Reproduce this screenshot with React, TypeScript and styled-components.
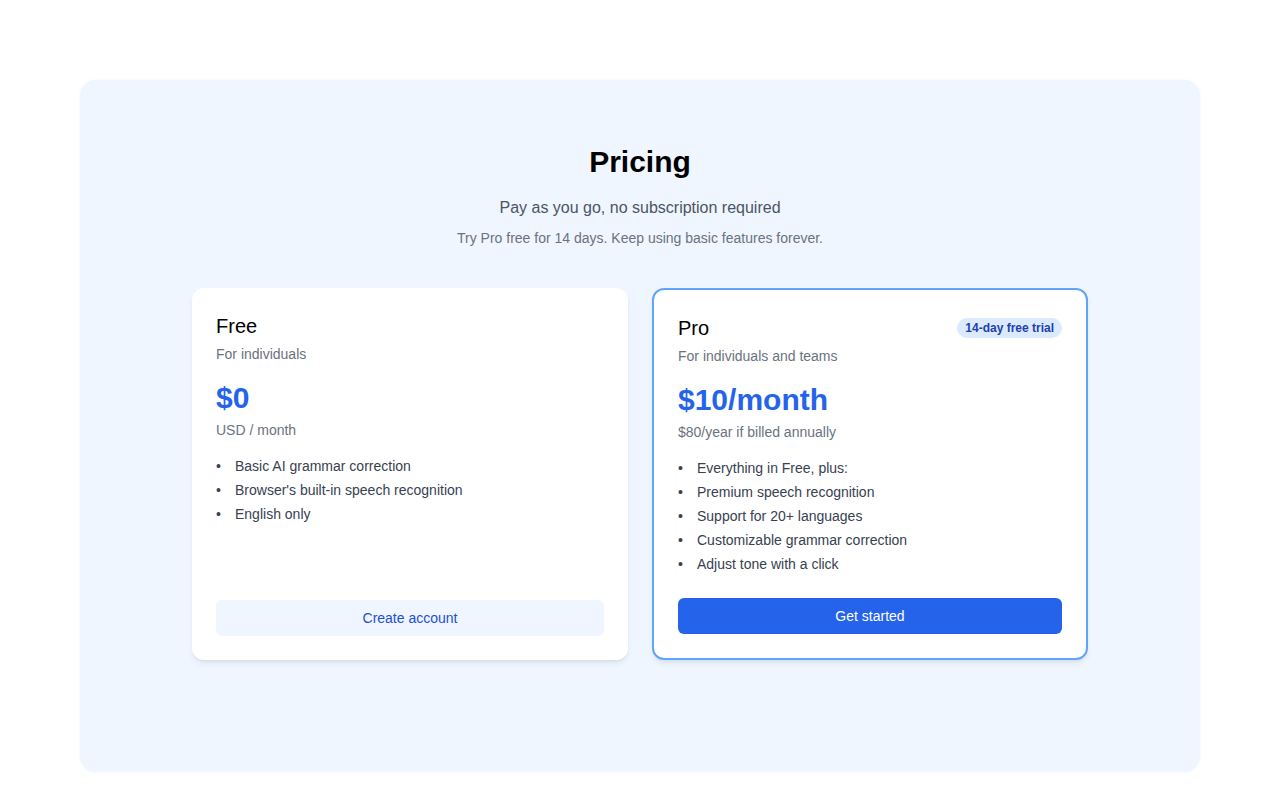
import styled, { createGlobalStyle } from 'styled-components';

type Plan = {
  name: string;
  audience: string;
  price: string;
  note: string;
  features: string[];
  cta: string;
  badge?: string;
  featured?: boolean;
};

const plans: Plan[] = [
  {
    name: 'Free',
    audience: 'For individuals',
    price: '$0',
    note: 'USD / month',
    features: [
      'Basic AI grammar correction',
      "Browser's built-in speech recognition",
      'English only',
    ],
    cta: 'Create account',
  },
  {
    name: 'Pro',
    audience: 'For individuals and teams',
    price: '$10/month',
    note: '$80/year if billed annually',
    features: [
      'Everything in Free, plus:',
      'Premium speech recognition',
      'Support for 20+ languages',
      'Customizable grammar correction',
      'Adjust tone with a click',
    ],
    cta: 'Get started',
    badge: '14-day free trial',
    featured: true,
  },
];

const GlobalStyle = createGlobalStyle`
  * {
    box-sizing: border-box;
  }

  body {
    margin: 0;
    background: #ffffff;
    font-family: 'Liberation Sans', Arial, sans-serif;
  }
`;

export default function App() {
  return (
    <>
      <GlobalStyle />
      <Page>
        <Panel>
          <Title>Pricing</Title>
          <Subtitle>Pay as you go, no subscription required</Subtitle>
          <Hint>Try Pro free for 14 days. Keep using basic features forever.</Hint>
          <Cards>
            {plans.map((plan) => (
              <Card key={plan.name} $featured={plan.featured}>
                <CardHead>
                  <PlanName>{plan.name}</PlanName>
                  {plan.badge && <Badge>{plan.badge}</Badge>}
                </CardHead>
                <Audience>{plan.audience}</Audience>
                <Price>{plan.price}</Price>
                <PriceNote>{plan.note}</PriceNote>
                <Features>
                  {plan.features.map((f) => (
                    <Feature key={f}>{f}</Feature>
                  ))}
                </Features>
                <CtaButton $primary={plan.featured}>{plan.cta}</CtaButton>
              </Card>
            ))}
          </Cards>
        </Panel>
      </Page>
    </>
  );
}

const Page = styled.div`
  width: 100%;
  min-height: 800px;
  padding: 80px 80px 28px;
`;

const Panel = styled.section`
  height: 692px;
  padding: 64px 24px 0;
  display: flex;
  flex-direction: column;
  align-items: center;
  background: #eff6ff;
  border-radius: 16px;
  box-shadow: 0 0 2px rgba(30, 64, 175, 0.08);
`;

const Title = styled.h1`
  margin: 0;
  font-size: 30px;
  line-height: 36px;
  font-weight: 700;
  color: #000000;
`;

const Subtitle = styled.p`
  margin: 16px 0 0;
  font-size: 16px;
  line-height: 24px;
  color: #4b5563;
`;

const Hint = styled.p`
  margin: 8px 0 0;
  font-size: 14px;
  line-height: 20px;
  color: #6b7280;
`;

const Cards = styled.div`
  margin-top: 40px;
  display: grid;
  grid-template-columns: 436px 436px;
  gap: 24px;
`;

const Card = styled.div<{ $featured?: boolean }>`
  display: flex;
  flex-direction: column;
  padding: 24px;
  background: #ffffff;
  border-radius: 12px;
  border: ${(p) => (p.$featured ? '2px solid #60a5fa' : 'none')};
  box-shadow: 0 4px 6px -1px rgba(0, 0, 0, 0.08), 0 2px 4px -2px rgba(0, 0, 0, 0.06);
`;

const CardHead = styled.div`
  display: flex;
  align-items: center;
  justify-content: space-between;
`;

const PlanName = styled.h2`
  margin: 0;
  font-size: 20px;
  line-height: 28px;
  font-weight: 400;
  color: #000000;
`;

const Badge = styled.span`
  padding: 2px 8px;
  font-size: 12px;
  line-height: 16px;
  font-weight: 700;
  color: #1e40af;
  background: #dbeafe;
  border-radius: 999px;
`;

const Audience = styled.p`
  margin: 4px 0 0;
  font-size: 14px;
  line-height: 20px;
  color: #6b7280;
`;

const Price = styled.div`
  margin-top: 16px;
  font-size: 30px;
  line-height: 36px;
  font-weight: 700;
  color: #2563eb;
`;

const PriceNote = styled.p`
  margin: 4px 0 0;
  font-size: 14px;
  line-height: 20px;
  color: #6b7280;
`;

const Features = styled.ul`
  margin: 16px 0 24px;
  padding: 0;
  list-style: none;
  display: flex;
  flex-direction: column;
  gap: 4px;
`;

const Feature = styled.li`
  font-size: 14px;
  line-height: 20px;
  color: #374151;

  &::before {
    content: '•';
    display: inline-block;
    width: 19px;
  }
`;

const CtaButton = styled.button<{ $primary?: boolean }>`
  margin-top: auto;
  height: 36px;
  width: 100%;
  border: none;
  border-radius: 6px;
  font-family: inherit;
  font-size: 14px;
  cursor: pointer;
  color: ${(p) => (p.$primary ? '#ffffff' : '#1d4ed8')};
  background: ${(p) => (p.$primary ? '#2563eb' : '#eff6ff')};
`;
